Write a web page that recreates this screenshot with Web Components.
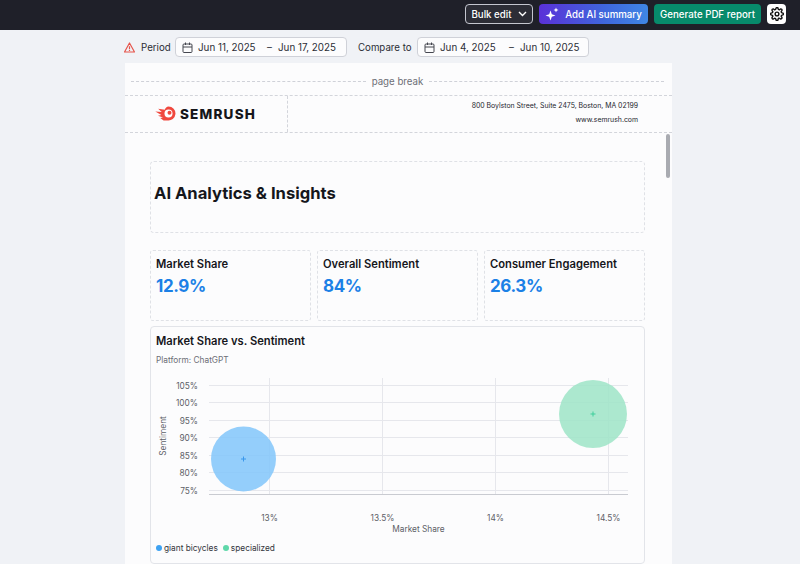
<!DOCTYPE html>
<html lang="en">
<head>
<meta charset="utf-8">
<title>AI Analytics & Insights</title>
<style>
  html, body { margin: 0; height: 564px; overflow: hidden; background: #f0f2f6; font-family: Inter, "Liberation Sans", sans-serif; }
</style>
</head>
<body>
<app-topbar></app-topbar>
<filter-row></filter-row>
<report-page>
  <page-break></page-break>
  <report-header></report-header>
  <report-title>AI Analytics &amp; Insights</report-title>
  <kpi-group>
    <kpi-card label="Market Share" value="12.9%"></kpi-card>
    <kpi-card label="Overall Sentiment" value="84%"></kpi-card>
    <kpi-card label="Consumer Engagement" value="26.3%"></kpi-card>
  </kpi-group>
  <bubble-chart></bubble-chart>
</report-page>

<script>
class AppTopbar extends HTMLElement {
  connectedCallback() {
    this.attachShadow({ mode: 'open' });
    this.shadowRoot.innerHTML = `
      <style>
        :host { display: flex; justify-content: flex-end; align-items: center; gap: 6px; height: 30px; padding: 0 14px 2px 0; box-sizing: border-box; background: #1f2029; font-size: 9.7px; font-weight: 500; color: #fff; }
        .btn { display: flex; align-items: center; justify-content: center; height: 20px; border-radius: 4px; box-sizing: border-box; white-space: nowrap; }
        .bulk { width: 68px; gap: 6px; background: #2c2d36; border: 1px solid #c4c6cf; }
        .ai { width: 109px; gap: 6px; background: linear-gradient(90deg, #5a31d8, #3f66dc 60%, #3f86e4); }
        .pdf { width: 107px; background: #078a6b; }
        .gear { width: 19px; background: #fff; }
        svg { display: block; }
      </style>
      <div class="btn bulk">Bulk edit
        <svg width="9" height="6" viewBox="0 0 9 6" fill="none" stroke="#fff" stroke-width="1.4"><path d="M1 1l3.5 3.5L8 1"/></svg>
      </div>
      <div class="btn ai">
        <svg width="14" height="14" viewBox="0 0 14 14" fill="#fff"><path d="M5.5 3.5l1.3 3.7 3.7 1.3-3.7 1.3-1.3 3.7-1.3-3.7L.5 8.5l3.7-1.3z"/><path d="M11 .5l.7 1.8 1.8.7-1.8.7-.7 1.8-.7-1.8-1.8-.7 1.8-.7z"/></svg>
        Add AI summary
      </div>
      <div class="btn pdf">Generate PDF report</div>
      <div class="btn gear">
        <svg width="14" height="14" viewBox="0 0 24 24" fill="none" stroke="#111" stroke-width="2.4" stroke-linejoin="round"><circle cx="12" cy="12" r="3.2"/><path d="M19.4 15a1.7 1.7 0 0 0 .3 1.8l.1.1a2 2 0 1 1-2.8 2.8l-.1-.1a1.7 1.7 0 0 0-2.9 1.2V21a2 2 0 1 1-4 0v-.1a1.7 1.7 0 0 0-2.9-1.2l-.1.1a2 2 0 1 1-2.8-2.8l.1-.1a1.7 1.7 0 0 0-1.2-2.9H3a2 2 0 1 1 0-4h.1a1.7 1.7 0 0 0 1.2-2.9l-.1-.1a2 2 0 1 1 2.8-2.8l.1.1a1.7 1.7 0 0 0 2.9-1.2V3a2 2 0 1 1 4 0v.1a1.7 1.7 0 0 0 2.9 1.2l.1-.1a2 2 0 1 1 2.8 2.8l-.1.1a1.7 1.7 0 0 0 1.2 2.9h.1a2 2 0 1 1 0 4h-.1a1.7 1.7 0 0 0-1.5 1z"/></svg>
      </div>
    `;
  }
}
customElements.define('app-topbar', AppTopbar);

class DateRange extends HTMLElement {
  connectedCallback() {
    this.attachShadow({ mode: 'open' });
    this.shadowRoot.innerHTML = `
      <style>
        :host { display: flex; align-items: center; width: 172px; height: 20px; box-sizing: border-box; padding-left: 6px; background: #fcfcfd; border: 1px solid #cfd1d8; border-radius: 4px; font-size: 9.8px; color: #2b2d35; }
        svg { display: block; flex: none; margin-right: 5px; }
        .from { width: 69px; flex: none; white-space: nowrap; }
        .dash { width: 11px; flex: none; }
        .to { white-space: nowrap; }
      </style>
      <svg width="11" height="11" viewBox="0 0 11 11" fill="none" stroke="#44464f" stroke-width="1"><rect x="1" y="2" width="9" height="8.5" rx="1"/><path d="M1 5h9M3.5 .5v2.5M7.5 .5v2.5"/></svg>
      <span class="from">${this.getAttribute('from')}</span>
      <span class="dash">–</span>
      <span class="to">${this.getAttribute('to')}</span>
    `;
  }
}
customElements.define('date-range', DateRange);

class FilterRow extends HTMLElement {
  connectedCallback() {
    this.attachShadow({ mode: 'open' });
    this.shadowRoot.innerHTML = `
      <style>
        :host { display: flex; align-items: center; height: 20px; margin: 7px 0 6px; padding-left: 124px; font-size: 9.7px; color: #2b2d35; }
        svg { display: block; margin-right: 6px; }
        .period { width: 34px; }
        .compare { margin-left: 11px; width: 59px; white-space: nowrap; }
      </style>
      <svg width="11" height="11" viewBox="0 0 11 11" fill="none" stroke="#e5544b" stroke-width="1.2" stroke-linejoin="round"><path d="M5.5 1L10.5 10H.5z"/><path d="M5.5 4.2v3M5.5 8.1v.8"/></svg>
      <span class="period">Period</span>
      <date-range from="Jun 11, 2025" to="Jun 17, 2025"></date-range>
      <span class="compare">Compare to</span>
      <date-range from="Jun 4, 2025" to="Jun 10, 2025"></date-range>
    `;
  }
}
customElements.define('filter-row', FilterRow);

class ReportPage extends HTMLElement {
  connectedCallback() {
    this.attachShadow({ mode: 'open' });
    this.shadowRoot.innerHTML = `
      <style>
        :host { display: block; position: relative; width: 547px; height: 501px; margin-left: 125px; background: #fcfcfd; overflow: hidden; }
        .thumb { position: absolute; left: 541px; top: 71px; width: 4px; height: 44px; border-radius: 2px; background: #a9abb1; }
      </style>
      <slot></slot>
      <div class="thumb"></div>
    `;
  }
}
customElements.define('report-page', ReportPage);

class PageBreak extends HTMLElement {
  connectedCallback() {
    this.attachShadow({ mode: 'open' });
    this.shadowRoot.innerHTML = `
      <style>
        :host { display: flex; align-items: center; gap: 6px; height: 32px; padding: 4px 8px 0 6px; box-sizing: border-box; font-size: 9.7px; color: #6c6e76; }
        i { flex: 1; border-top: 1px dashed #cfd1d8; }
      </style>
      <i></i><span>page break</span><i></i>
    `;
  }
}
customElements.define('page-break', PageBreak);

class ReportHeader extends HTMLElement {
  connectedCallback() {
    this.attachShadow({ mode: 'open' });
    this.shadowRoot.innerHTML = `
      <style>
        :host { display: flex; height: 38px; box-sizing: border-box; border: 1px dashed #d3d5db; border-width: 1px 0; color: #24262d; }
        .logo { display: flex; align-items: center; gap: 4px; width: 163px; box-sizing: border-box; padding: 0 0 1px 30px; border-right: 1px dashed #d3d5db; }
        .word { font-size: 13.5px; font-weight: 800; letter-spacing: 1.2px; color: #15161b; }
        .addr { flex: 1; display: flex; flex-direction: column; align-items: flex-end; justify-content: space-between; padding: 4px 34px 6px 0; font-size: 6.9px; line-height: 12px; }
        svg { display: block; }
      </style>
      <div class="logo">
        <svg width="21" height="15" viewBox="0 0 21 15"><path fill="#f0483e" d="M13.5 .5a7 7 0 1 1-1.2 13.9H8.6L5.2 12 8 11.6 3 9.7 6.4 9 .3 5.5l6.4.6L3.2 2.7l6.5 1.1C10.5 1.8 11.7 .7 13.5 .5z"/><circle cx="13.5" cy="7.5" r="4" fill="#fff"/><circle cx="14.5" cy="6.7" r="2" fill="#f0483e"/></svg>
        <span class="word">SEMRUSH</span>
      </div>
      <div class="addr"><span>800 Boylston Street, Suite 2475, Boston, MA 02199</span><span>www.semrush.com</span></div>
    `;
  }
}
customElements.define('report-header', ReportHeader);

class ReportTitle extends HTMLElement {
  connectedCallback() {
    this.attachShadow({ mode: 'open' });
    this.shadowRoot.innerHTML = `
      <style>
        :host { display: block; height: 72px; margin: 28px 27px 17px 25px; box-sizing: border-box; padding: 20px 3px 0; border: 1px dashed #dfe1e6; border-radius: 4px; font-size: 16.6px; line-height: 22px; font-weight: 700; color: #15161b; white-space: nowrap; }
      </style>
      <slot></slot>
    `;
  }
}
customElements.define('report-title', ReportTitle);

class KpiGroup extends HTMLElement {
  connectedCallback() {
    this.attachShadow({ mode: 'open' });
    this.shadowRoot.innerHTML = `
      <style>
        :host { display: grid; grid-template-columns: repeat(3, 1fr); gap: 6px; height: 71px; margin: 0 27px 5px 25px; }
      </style>
      <slot></slot>
    `;
  }
}
customElements.define('kpi-group', KpiGroup);

class KpiCard extends HTMLElement {
  connectedCallback() {
    this.attachShadow({ mode: 'open' });
    this.shadowRoot.innerHTML = `
      <style>
        :host { display: block; box-sizing: border-box; padding: 6px 5px; border: 1px dashed #dfe1e6; border-radius: 3px; }
        .label { font-size: 11.2px; line-height: 15px; font-weight: 600; color: #15161b; white-space: nowrap; }
        .value { margin-top: 3px; font-size: 17px; letter-spacing: -0.4px; line-height: 22px; font-weight: 700; color: #1b80e6; }
      </style>
      <div class="label">${this.getAttribute('label')}</div>
      <div class="value">${this.getAttribute('value')}</div>
    `;
  }
}
customElements.define('kpi-card', KpiCard);

class BubbleChart extends HTMLElement {
  connectedCallback() {
    // chart coordinates are local to the card: card starts at x=150, y=326
    const hLines = [59.5, 76.5, 94.5, 111.5, 129.5, 146.5, 164.5];
    const yLabels = ['105%', '100%', '95%', '90%', '85%', '80%', '75%'];
    const vLines = [[119.5, '13%'], [232.5, '13.5%'], [345.5, '14%'], [458.5, '14.5%']];
    const grid = hLines.map(y => `<line x1="59" x2="478" y1="${y}" y2="${y}"/>`).join('')
      + vLines.map(v => `<line x1="${v[0]}" x2="${v[0]}" y1="52" y2="168"/>`).join('');
    const yText = hLines.map((y, i) => `<text x="48" y="${y + 3}" text-anchor="end">${yLabels[i]}</text>`).join('');
    const xText = vLines.map(v => `<text x="${v[0]}" y="194.5" text-anchor="middle">${v[1]}</text>`).join('');
    const bubble = (x, y, r, fill, mark) => `
      <circle cx="${x}" cy="${y}" r="${r}" fill="${fill}" fill-opacity=".88"/>
      <path d="M${x - 2.5} ${y}h5M${x} ${y - 2.5}v5" stroke="${mark}" stroke-width="1"/>`;
    this.attachShadow({ mode: 'open' });
    this.shadowRoot.innerHTML = `
      <style>
        :host { display: block; position: relative; height: 238px; margin: 0 27px 0 25px; box-sizing: border-box; border: 1px solid #e2e4e9; border-radius: 4px; color: #15161b; }
        h3 { position: relative; margin: 0; padding: 7px 5px 0; font-size: 11.2px; line-height: 15px; font-weight: 600; }
        p { position: relative; margin: 5px 5px 0; font-size: 8.3px; line-height: 12px; color: #6c6e76; }
        svg { position: absolute; left: -1px; top: -1px; font-family: Inter, "Liberation Sans", sans-serif; font-size: 8.3px; fill: #5d5f67; }
        .grid line { stroke: #e6e7ec; stroke-width: 1; }
        .axis { stroke: #c9cbd1; stroke-width: 1; }
        .legend { position: absolute; left: 5px; top: 215px; display: flex; gap: 5px; font-size: 8.3px; line-height: 12px; color: #33353c; }
        .legend span { display: flex; align-items: center; gap: 2px; }
        .legend i { width: 6px; height: 6px; border-radius: 50%; }
      </style>
      <svg width="495" height="238" viewBox="0 0 495 238">
        <g class="grid">${grid}</g>
        <line class="axis" x1="59" x2="478" y1="168.5" y2="168.5"/>
        ${yText}${xText}
        <text transform="translate(15.5 110) rotate(-90)" text-anchor="middle">Sentiment</text>
        <text x="268.5" y="205.5" text-anchor="middle">Market Share</text>
        ${bubble(93.5, 133, 32.5, '#85c7fb', '#3b98ec')}
        ${bubble(443, 88, 34, '#a0e5c8', '#3fcf9b')}
      </svg>
      <h3>Market Share vs. Sentiment</h3>
      <p>Platform: ChatGPT</p>
      <div class="legend">
        <span><i style="background:#3ea2f2"></i>giant bicycles</span>
        <span><i style="background:#5fd8aa"></i>specialized</span>
      </div>
    `;
  }
}
customElements.define('bubble-chart', BubbleChart);
</script>
</body>
</html>
